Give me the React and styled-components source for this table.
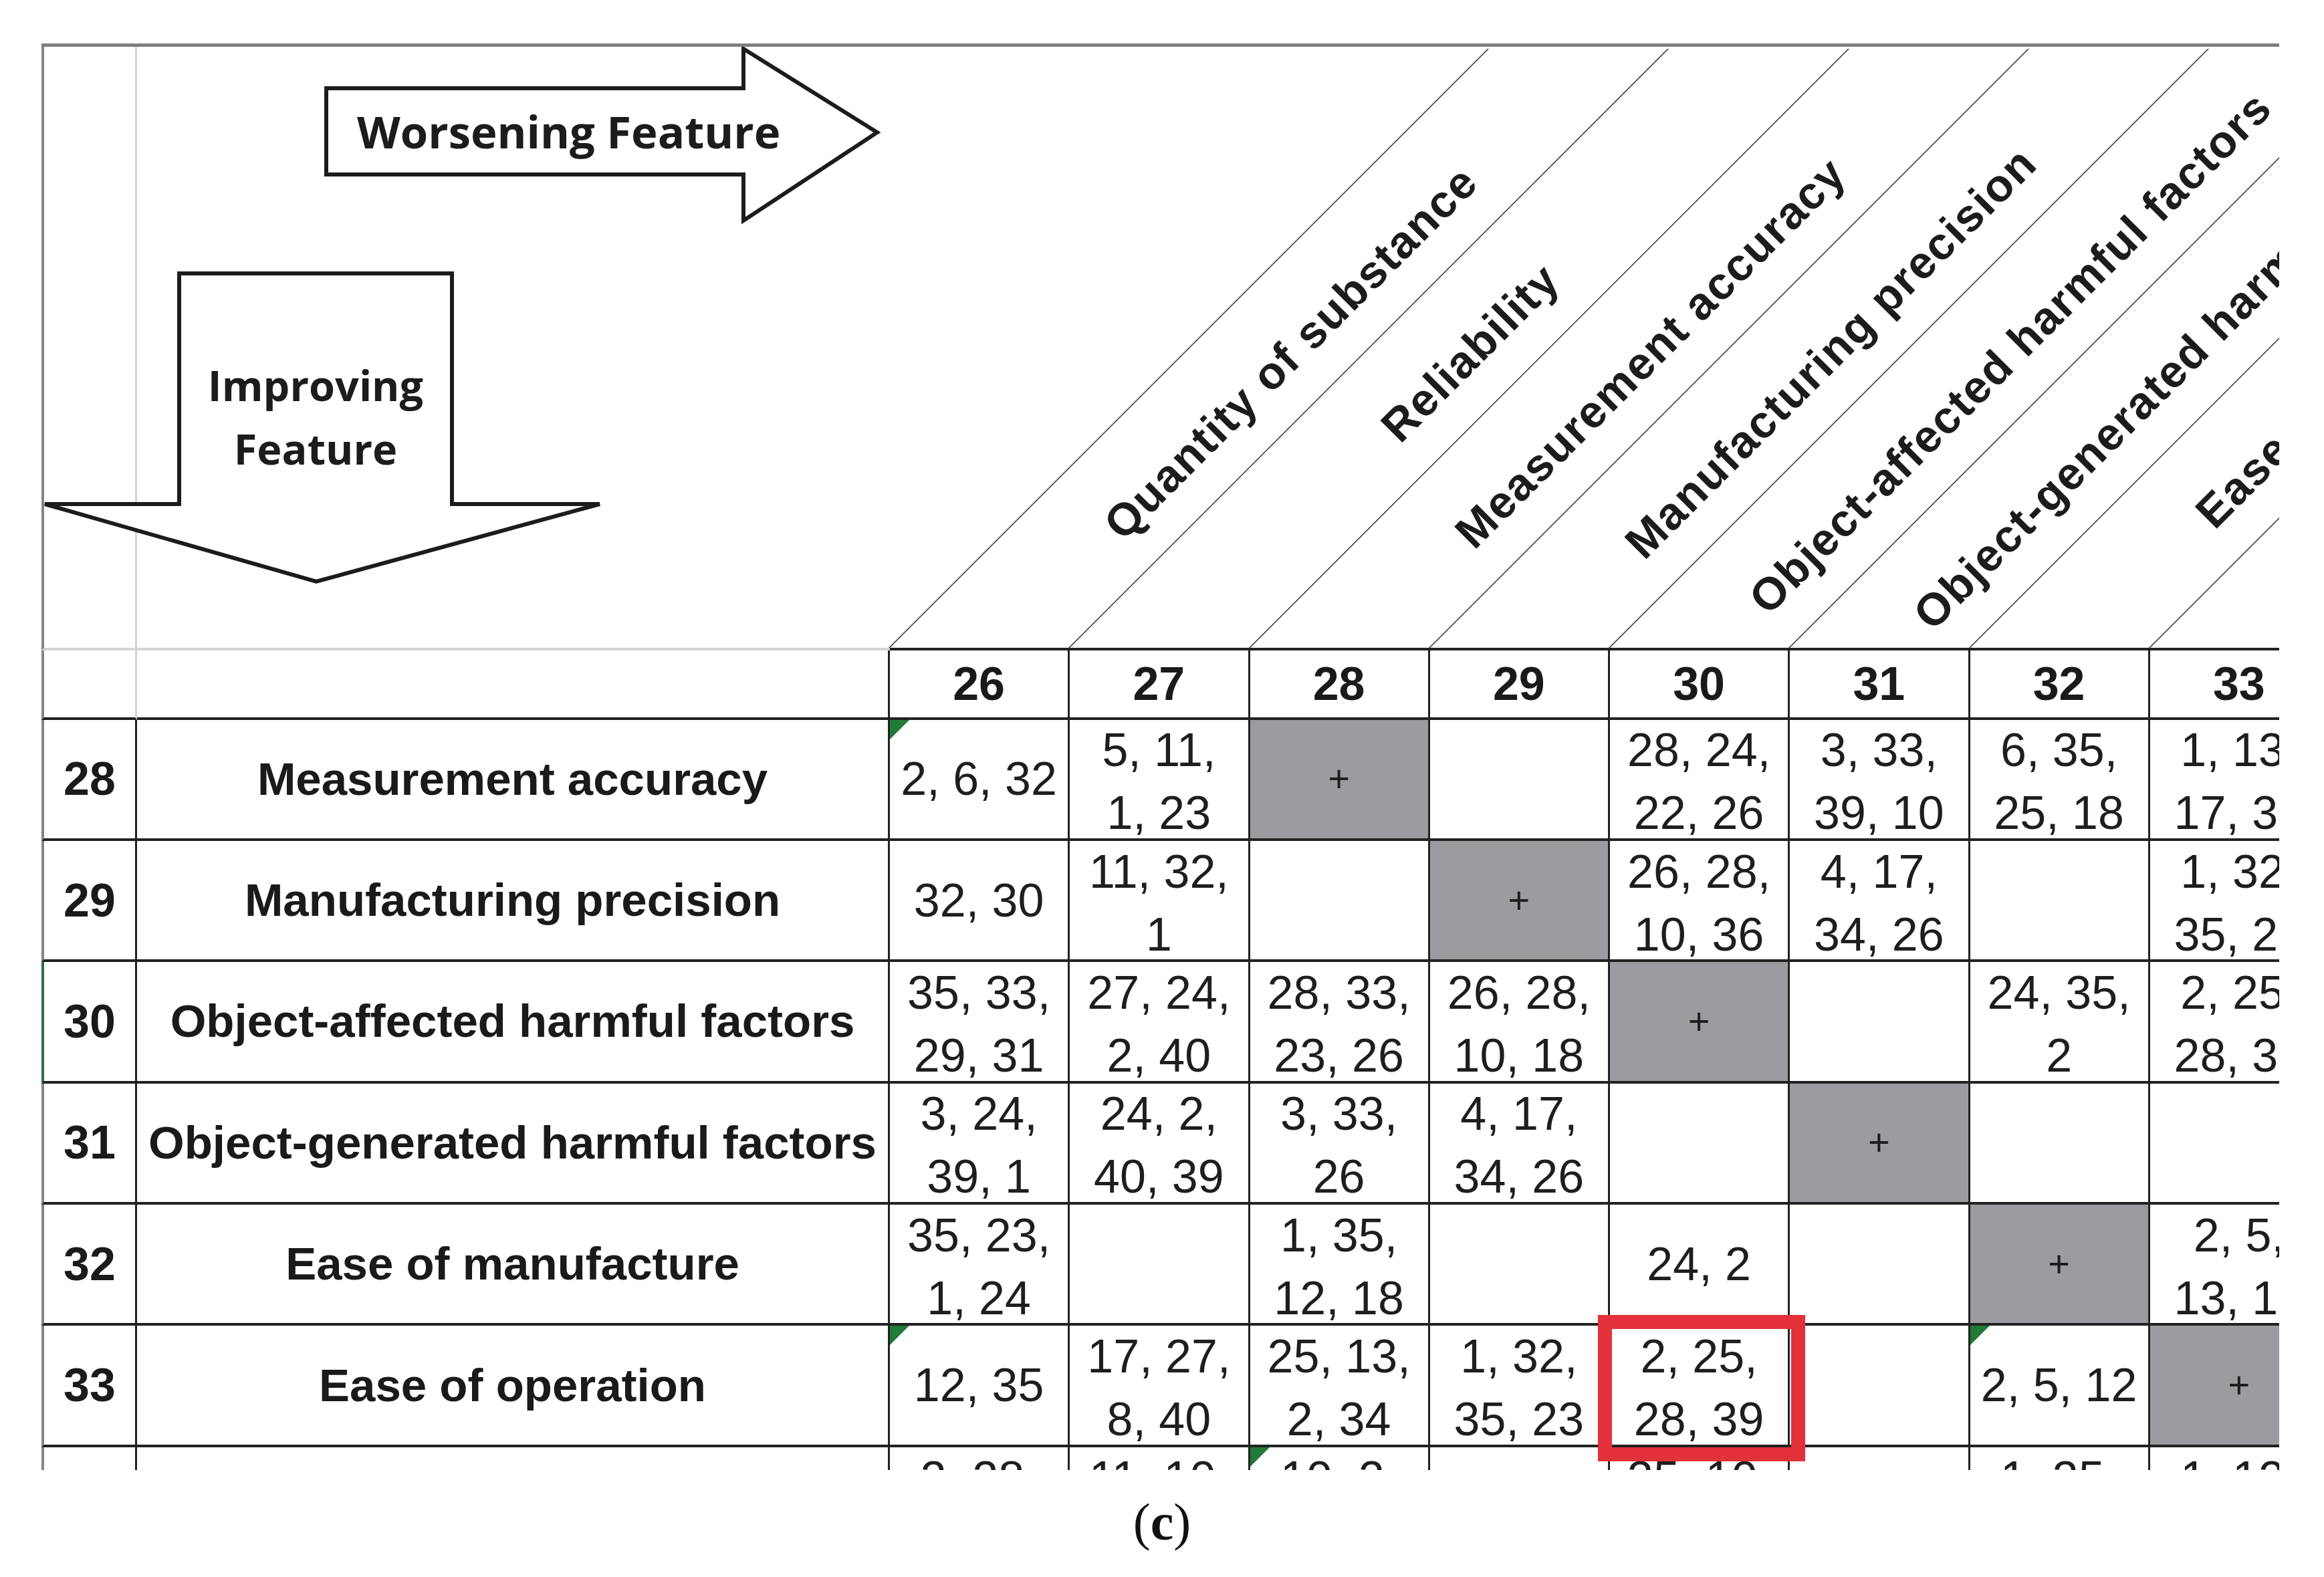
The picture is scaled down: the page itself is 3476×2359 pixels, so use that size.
import React from 'react'
import styled, { createGlobalStyle, css } from 'styled-components'

const GlobalStyle = createGlobalStyle`
  *, *::before, *::after { box-sizing: border-box; }
  html, body { margin: 0; padding: 0; background: #ffffff; }
  body { font-family: "Liberation Sans", Arial, sans-serif; color: #1a1a1a; }
`

const columns = [
  { n: 26, title: 'Quantity of substance' },
  { n: 27, title: 'Reliability' },
  { n: 28, title: 'Measurement accuracy' },
  { n: 29, title: 'Manufacturing precision' },
  { n: 30, title: 'Object-affected harmful factors' },
  { n: 31, title: 'Object-generated harmful factors' },
  { n: 32, title: 'Ease of manufacture' },
  { n: 33, title: 'Ease of operation' },
]

// '|' splits a cell into lines, '+' is the grey diagonal cell
const rows = [
  {
    n: 28, name: 'Measurement accuracy', flags: [0],
    cells: ['2, 6, 32', '5, 11,|1, 23', '+', '', '28, 24,|22, 26', '3, 33,|39, 10', '6, 35,|25, 18', '1, 13,|17, 34'],
  },
  {
    n: 29, name: 'Manufacturing precision',
    cells: ['32, 30', '11, 32,|1', '', '+', '26, 28,|10, 36', '4, 17,|34, 26', '', '1, 32,|35, 23'],
  },
  {
    n: 30, name: 'Object-affected harmful factors', selected: true,
    cells: ['35, 33,|29, 31', '27, 24,|2, 40', '28, 33,|23, 26', '26, 28,|10, 18', '+', '', '24, 35,|2', '2, 25,|28, 39'],
  },
  {
    n: 31, name: 'Object-generated harmful factors',
    cells: ['3, 24,|39, 1', '24, 2,|40, 39', '3, 33,|26', '4, 17,|34, 26', '', '+', '', ''],
  },
  {
    n: 32, name: 'Ease of manufacture',
    cells: ['35, 23,|1, 24', '', '1, 35,|12, 18', '', '24, 2', '', '+', '2, 5,|13, 16'],
  },
  {
    n: 33, name: 'Ease of operation', flags: [0, 6], highlight: 4,
    cells: ['12, 35', '17, 27,|8, 40', '25, 13,|2, 34', '1, 32,|35, 23', '2, 25,|28, 39', '', '2, 5, 12', '+'],
  },
  {
    n: 34, name: 'Ease of repair', flags: [2],
    cells: ['2, 28,|10, 25', '11, 10,|1, 16', '10, 2,|13', '', '35, 10,|2, 16', '', '1, 35,|11, 10', '1, 12,|26, 15'],
  },
]

const Page = styled.main`
  width: 3476px;
`

const Frame = styled.div`
  margin: 65px 0 0 62px;
  width: 3347px;
  height: 2134px;
  overflow: hidden;
  border-top: 5px solid #7f7f7f;
`

const Matrix = styled.div`
  display: grid;
  grid-template-columns: 143px 1126px repeat(8, 269.25px);
  grid-template-rows: 903px 103.5px repeat(7, 181.4px);
`

const Corner = styled.div`
  grid-column: span 2;
  display: flex;
  flex-direction: column;
  align-items: flex-start;
  border-left: 4px solid #858585;
  border-bottom: 4px solid #d4d4d4;
  background: linear-gradient(
    to right,
    transparent 136px,
    #d4d4d4 136px,
    #d4d4d4 139px,
    transparent 139px
  );
`

const ArrowBox = styled.div`
  position: relative;
  flex-shrink: 0;
  width: ${p => p.$w}px;
  height: ${p => p.$h}px;
  margin: ${p => p.$top}px 0 0 ${p => p.$left}px;
`

const ArrowShape = styled.svg`
  position: absolute;
  left: 0;
  top: 0;
  overflow: visible;
`

const WorseLabel = styled.div`
  position: relative;
  margin-top: 61px;
  height: 129px;
  padding-left: 49px;
  font-family: "Open Sans", "Liberation Sans", sans-serif;
  font-weight: 700;
  font-size: 67px;
  line-height: 129px;
  color: #1c1c1c;
  white-space: nowrap;
`

const ImproveLabel = styled.div`
  position: relative;
  margin-left: 202px;
  width: 408px;
  padding-top: 122px;
  font-family: "Open Sans", "Liberation Sans", sans-serif;
  font-weight: 700;
  font-size: 63px;
  line-height: 95px;
  text-align: center;
  color: #1c1c1c;
`

const HeadCell = styled.div`
  position: relative;
  display: flex;
  align-items: center;
  justify-content: center;
  border-bottom: 4px solid #222;

  &::before {
    content: '';
    position: absolute;
    left: -2px;
    bottom: 0;
    width: 0;
    height: 896px;
    border-left: 2px solid #2a2a2a;
    transform-origin: bottom left;
    transform: skewX(-45deg);
  }
`

const HeadLabel = styled.span`
  flex-shrink: 0;
  white-space: nowrap;
  font-size: 68px;
  font-weight: 700;
  letter-spacing: 2px;
  line-height: 1;
  color: #1c1c1c;
  transform: translate(464px, 7px) rotate(-45deg);
`

const Cell = styled.div`
  position: relative;
  display: flex;
  flex-direction: column;
  align-items: center;
  justify-content: center;
  text-align: center;
  white-space: nowrap;
  border-right: 3px solid ${p => (p.$soft ? '#d4d4d4' : '#222')};
  border-bottom: 4px solid #222;
  font-size: 70px;
`

const IndexCell = styled(Cell)`
  border-left: 4px solid ${p => (p.$selected ? '#2c6e49' : '#858585')};
  font-weight: 700;
`

const NameCell = styled(Cell)`
  font-size: 69px;
  font-weight: 700;
`

const NumberCell = styled(Cell)`
  font-weight: 700;
`

const DataCell = styled(Cell)`
  line-height: 94px;
  padding-top: ${p => (p.$multi ? 8 : 0)}px;
  background: ${p => (p.$diag ? '#9b9c9f' : '#ffffff')};
  color: #1e1e1e;
  z-index: ${p => (p.$highlight ? 1 : 'auto')};

  ${p => p.$flag && css`
    &::before {
      content: '';
      position: absolute;
      left: 0;
      top: 0;
      width: 0;
      height: 0;
      border-top: 29px solid #217a38;
      border-right: 29px solid transparent;
    }
  `}

  ${p => p.$highlight && css`
    &::after {
      content: '';
      position: absolute;
      left: -18px;
      right: -26px;
      top: -16px;
      bottom: -25px;
      border: 21px solid #e2313a;
    }
  `}
`

const Plus = styled.span`
  font-size: 56px;
  line-height: 1;
`

const Caption = styled.div`
  margin-top: 28px;
  text-align: center;
  font-family: "Liberation Serif", "Times New Roman", serif;
  font-size: 78px;
  line-height: 100px;
  color: #111;

  b { font-weight: 700; }
`

const WorseningArrow = () => (
  <ArrowBox $w={830} $h={262} $top={1} $left={419}>
    <ArrowShape width="830" height="262" viewBox="0 0 830 262">
      <path
        d="M3 61 H627 V2 L827 127 L627 259 V190 H3 Z"
        fill="#fff"
        stroke="#1c1c1c"
        strokeWidth="6"
      />
    </ArrowShape>
    <WorseLabel>Worsening Feature</WorseLabel>
  </ArrowBox>
)

const ImprovingArrow = () => (
  <ArrowBox $w={834} $h={468} $top={73} $left={0}>
    <ArrowShape width="834" height="468" viewBox="0 0 834 468">
      <path
        d="M202 3 H610 V348 H831 L407 464 L1 348 H202 Z"
        fill="#fff"
        stroke="#1c1c1c"
        strokeWidth="6"
      />
    </ArrowShape>
    <ImproveLabel>Improving<br />Feature</ImproveLabel>
  </ArrowBox>
)

const renderCell = (row, value, i) => {
  const lines = value ? value.split('|') : []
  const diag = value === '+'
  return (
    <DataCell
      key={i}
      $diag={diag}
      $multi={lines.length > 1}
      $flag={(row.flags || []).includes(i)}
      $highlight={row.highlight === i}
    >
      {diag ? <Plus>+</Plus> : lines.map((l, k) => <span key={k}>{l}</span>)}
    </DataCell>
  )
}

export default function App() {
  return (
    <Page>
      <GlobalStyle />
      <Frame>
        <Matrix>
          <Corner>
            <WorseningArrow />
            <ImprovingArrow />
          </Corner>
          {columns.map(c => (
            <HeadCell key={c.n}>
              <HeadLabel>{c.title}</HeadLabel>
            </HeadCell>
          ))}

          <IndexCell $soft />
          <Cell />
          {columns.map(c => (
            <NumberCell key={c.n}>{c.n}</NumberCell>
          ))}

          {rows.map(row => (
            <React.Fragment key={row.n}>
              <IndexCell $selected={row.selected}>{row.n}</IndexCell>
              <NameCell>{row.name}</NameCell>
              {row.cells.map((v, i) => renderCell(row, v, i))}
            </React.Fragment>
          ))}
        </Matrix>
      </Frame>
      <Caption>(<b>c</b>)</Caption>
    </Page>
  )
}
